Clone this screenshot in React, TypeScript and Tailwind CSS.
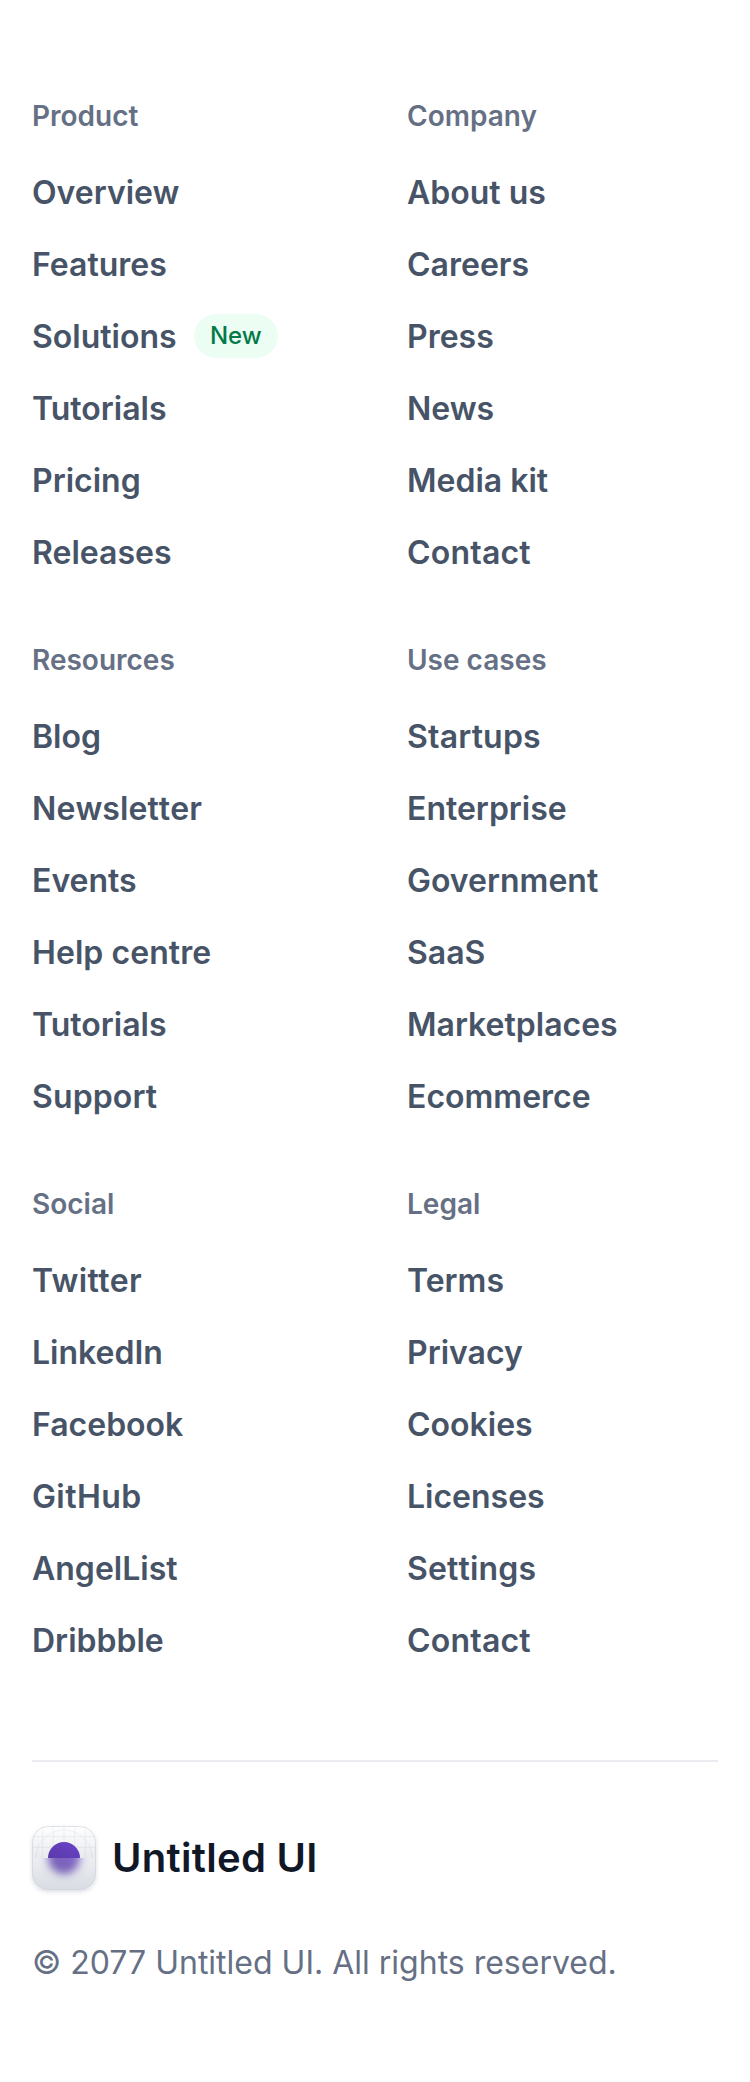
const groups: { title: string; links: string[] }[] = [
  { title: "Product", links: ["Overview", "Features", "Solutions", "Tutorials", "Pricing", "Releases"] },
  { title: "Company", links: ["About us", "Careers", "Press", "News", "Media kit", "Contact"] },
  { title: "Resources", links: ["Blog", "Newsletter", "Events", "Help centre", "Tutorials", "Support"] },
  { title: "Use cases", links: ["Startups", "Enterprise", "Government", "SaaS", "Marketplaces", "Ecommerce"] },
  { title: "Social", links: ["Twitter", "LinkedIn", "Facebook", "GitHub", "AngelList", "Dribbble"] },
  { title: "Legal", links: ["Terms", "Privacy", "Cookies", "Licenses", "Settings", "Contact"] },
];

const spacing: Record<string, string> = {
  Contact: "tracking-[0.2px]",
  Newsletter: "tracking-[0.08px] [font-kerning:none]",
  "Help centre": "tracking-[0.06px]",
  Support: "tracking-[0.12px]",
  Startups: "tracking-[0.18px]",
  Twitter: "tracking-[0.4px]",
  GitHub: "tracking-[0.4px]",
  Settings: "tracking-[0.18px] [font-kerning:none]",
};

function Logo() {
  return (
    <svg width="64" height="64" viewBox="0 0 64 64" className="shrink-0 overflow-visible" aria-hidden="true">
      <defs>
        <linearGradient id="tile" x1="0" y1="0" x2="0" y2="1">
          <stop offset="0" stopColor="#ffffff" />
          <stop offset="1" stopColor="#d0d5dd" />
        </linearGradient>
        <linearGradient id="dot" gradientUnits="userSpaceOnUse" x1="24" y1="48" x2="40" y2="16">
          <stop offset="0" stopColor="#53389e" />
          <stop offset="1" stopColor="#6941c6" />
        </linearGradient>
        <filter id="soft" x="-50%" y="-50%" width="200%" height="200%">
          <feGaussianBlur stdDeviation="4" />
        </filter>
        <filter id="shadow" x="-20%" y="-20%" width="140%" height="140%">
          <feDropShadow dx="0" dy="2" stdDeviation="2" floodColor="#101828" floodOpacity="0.13" />
        </filter>
        <clipPath id="upper"><rect width="64" height="32" /></clipPath>
        <clipPath id="lower"><path d="M0 32h64v16a16 16 0 0 1-16 16H16A16 16 0 0 1 0 48z" /></clipPath>
      </defs>
      <rect width="64" height="64" rx="16" fill="url(#tile)" filter="url(#shadow)" />
      <g fill="none" stroke="#667085" strokeOpacity="0.08">
        <path d="M10.7 1.5V32M21.3 0V32M32 0V32M42.7 0V32M53.3 1.5V32M1.5 10.7h61M0 21.3h64" />
        <path d="M4 32a28 28 0 0 1 56 0" />
      </g>
      <circle cx="32" cy="32" r="16" fill="url(#dot)" clipPath="url(#upper)" />
      <g clipPath="url(#lower)">
        <circle cx="32" cy="32" r="16" fill="url(#dot)" filter="url(#soft)" />
        <rect y="32" width="64" height="32" fill="#fff" fillOpacity="0.2" />
      </g>
      <rect x="0.5" y="0.5" width="63" height="63" rx="15.5" fill="none" stroke="#d0d5dd" strokeOpacity="0.7" />
    </svg>
  );
}

export default function App() {
  return (
    <footer className="min-h-[2082px] bg-white px-8 pt-24 font-['Inter',sans-serif]">
      <div className="grid grid-cols-[343px_343px] gap-x-8 gap-y-16">
        {groups.map((group) => (
          <section key={group.title}>
            <h4 className="text-[28px] leading-10 font-semibold text-[#667085]">{group.title}</h4>
            <ul className="mt-8 flex flex-col gap-6">
              {group.links.map((link) => (
                <li key={link} className="flex h-12 items-center gap-[17.4px] text-[32px] font-semibold text-[#475467]">
                  <a className={"pt-0.5 " + (spacing[link] ?? "")}>{link}</a>
                  {link === "Solutions" && (
                    <span className="rounded-full bg-[#ecfdf3] px-4 py-1 text-2xl leading-9 font-medium text-[#027a48]">New</span>
                  )}
                </li>
              ))}
            </ul>
          </section>
        ))}
      </div>
      <div className="mt-24 border-t-2 border-[#eaecf0] pt-16">
        <div className="flex h-16 items-center gap-4">
          <Logo />
          <span className="text-[40px] font-semibold tracking-[0.3px] text-[#101828]">Untitled UI</span>
        </div>
        <p className="mt-[49px] text-[32px] leading-12 text-[#667085]">© 2077 Untitled UI. All rights reserved.</p>
      </div>
    </footer>
  );
}
